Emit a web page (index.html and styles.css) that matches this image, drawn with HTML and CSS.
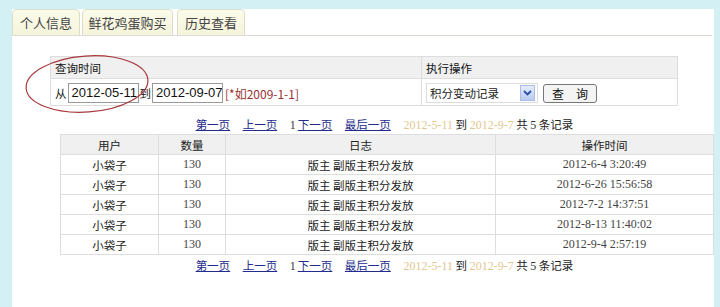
FILE: index.html
```html
<!DOCTYPE html>
<html lang="zh-CN">
<head>
    <meta charset="UTF-8">
    <title>积分变动记录</title>
    <link rel="stylesheet" href="styles.css">
</head>
<body>
    <div class="frame">
        <div class="tabs">
            <div class="tab tab-info">个人信息</div>
            <div class="tab tab-shop">鲜花鸡蛋购买</div>
            <div class="tab tab-hist">历史查看</div>
        </div>

        <div class="panel">
            <table class="query">
                <tr class="query-head">
                    <td class="col-time">查询时间</td>
                    <td>执行操作</td>
                </tr>
                <tr class="query-body">
                    <td class="col-time">
                        <div class="range">
                            <span>从</span><span class="field">2012-05-11</span><span>到</span><span class="field">2012-09-07</span>
                            <span class="hint">[*如2009-1-1]</span>
                        </div>
                    </td>
                    <td>
                        <div class="action">
                            <div class="select">
                                <span>积分变动记录</span>
                                <span class="arrow">
                                    <svg width="9" height="6" viewBox="0 0 9 6"><path d="M1 1 L4.5 4.5 L8 1" fill="none" stroke="#2c4fa8" stroke-width="1.8"/></svg>
                                </span>
                            </div>
                            <button class="btn">查　询</button>
                        </div>
                    </td>
                </tr>
            </table>

            <div class="pager pager-top">
                <a href="#">第一页</a>
                <a href="#">上一页</a>
                <span class="num">1</span><a href="#" class="tight">下一页</a>
                <a href="#">最后一页</a>
                <span class="date">2012-5-11</span> 到 <span class="date">2012-9-7</span> 共 <span class="num">5</span> 条记录
            </div>

            <table class="log">
                <tr>
                    <th class="c-user">用户</th>
                    <th class="c-qty">数量</th>
                    <th class="c-note">日志</th>
                    <th class="c-time">操作时间</th>
                </tr>
                <tr><td>小袋子</td><td class="serif">130</td><td>版主 副版主积分发放</td><td class="serif">2012-6-4 3:20:49</td></tr>
                <tr><td>小袋子</td><td class="serif">130</td><td>版主 副版主积分发放</td><td class="serif">2012-6-26 15:56:58</td></tr>
                <tr><td>小袋子</td><td class="serif">130</td><td>版主 副版主积分发放</td><td class="serif">2012-7-2 14:37:51</td></tr>
                <tr><td>小袋子</td><td class="serif">130</td><td>版主 副版主积分发放</td><td class="serif">2012-8-13 11:40:02</td></tr>
                <tr><td>小袋子</td><td class="serif">130</td><td>版主 副版主积分发放</td><td class="serif">2012-9-4 2:57:19</td></tr>
            </table>

            <div class="pager">
                <a href="#">第一页</a>
                <a href="#">上一页</a>
                <span class="num">1</span><a href="#" class="tight">下一页</a>
                <a href="#">最后一页</a>
                <span class="date">2012-5-11</span> 到 <span class="date">2012-9-7</span> 共 <span class="num">5</span> 条记录
            </div>
        </div>
    </div>

    <!-- hand-drawn circle around the date field -->
    <svg class="mark" width="720" height="307" viewBox="0 0 720 307">
        <ellipse cx="87" cy="84" rx="61" ry="28" transform="rotate(-4 87 84)" fill="none" stroke="#a8383c" stroke-width="1.2"/>
    </svg>
</body>
</html>
```

FILE: styles.css
```css
body {
    margin: 0;
    background: #d3f0f4;
    font-family: "Noto Sans CJK SC", sans-serif;
    font-size: 11.5px;
    color: #222;
    height: 307px;
    overflow: hidden;
    position: relative;
}

.frame {
    margin: 9px 0 0 12px;
    width: 702px;
    height: 298px;
    background: #fff;
}

.tabs {
    display: flex;
    height: 26px;
    align-items: flex-end;
}

.tab {
    height: 26px;
    line-height: 25px;
    font-size: 13px;
    color: #444;
    text-align: center;
    background: linear-gradient(#fbfbea, #f5f5dc);
    border: 1px solid #dcdcc8;
    border-bottom: none;
    border-radius: 5px 5px 0 0;
    box-sizing: border-box;
}

.tab-info { width: 68px; }
.tab-shop { width: 91px; margin-left: 2px; }
.tab-hist { width: 68px; margin-left: 4px; }

.panel {
    border-top: 1px solid #dcdcd4;
    width: 700px;
    padding-top: 20px;
}

.query {
    margin-left: 38px;
    width: 628px;
    border-collapse: collapse;
    border: 1px solid #ddd;
}

.query td {
    padding: 0 0 0 4px;
    border: 1px solid #ddd;
    box-sizing: border-box;
}

.query .col-time {
    width: 371px;
}

.query-head td {
    height: 22px;
    background: #f0f0f0;
    color: #111;
}

.query-body td {
    height: 27px;
    padding-top: 2px;
}

.range {
    display: flex;
    align-items: center;
    white-space: nowrap;
}

.field {
    display: inline-block;
    width: 66px;
    height: 18px;
    line-height: 18px;
    padding-left: 3px;
    border: 1px solid #999;
    font-family: "Liberation Sans", sans-serif;
    font-size: 13px;
    color: #111;
    margin: 0 1px;
    overflow: hidden;
}

.hint {
    color: #993333;
    font-size: 12px;
    margin-left: 1px;
}

.action {
    display: flex;
    align-items: center;
}

.select {
    width: 112px;
    height: 20px;
    box-sizing: border-box;
    border: 1px solid #ddd;
    display: flex;
    align-items: center;
    justify-content: space-between;
    padding-left: 3px;
    color: #222;
}

.arrow {
    width: 15px;
    height: 16px;
    margin-right: 2px;
    background: linear-gradient(#e6eefc, #b9cbf2);
    border: 1px solid #a9bde8;
    box-sizing: border-box;
    display: flex;
    align-items: center;
    justify-content: center;
}

.btn {
    margin-left: 5px;
    width: 54px;
    height: 19px;
    padding: 0;
    font-family: "Noto Sans CJK SC", sans-serif;
    font-size: 12px;
    line-height: 15px;
    color: #111;
    background: #f4f4f4;
    border: 1px solid #777;
    border-radius: 3px;
}

.pager {
    margin-left: 48px;
    width: 649px;
    height: 20px;
    line-height: 20px;
    text-align: center;
    color: #222;
}

.pager-top {
    margin-top: 8px;
}

.pager a {
    color: #232b8c;
    text-decoration: underline;
    margin-right: 10px;
}

.pager a.tight {
    margin-left: 2px;
}

.pager .num {
    font-family: "Liberation Serif", serif;
    font-size: 12px;
    color: #333;
}

.pager .date {
    font-family: "Liberation Serif", serif;
    font-size: 12px;
    color: #e3c78f;
}

.log {
    margin-left: 48px;
    width: 649px;
    border-collapse: collapse;
    table-layout: fixed;
}

.log th,
.log td {
    border: 1px solid #dedede;
    height: 19px;
    padding: 0;
    text-align: center;
    font-weight: normal;
    color: #222;
}

.log th {
    background: #f0f0f0;
}

.c-user { width: 97px; }
.c-qty { width: 66px; }
.c-note { width: 269px; }
.c-time { width: 217px; }

.log td.serif {
    font-family: "Liberation Serif", serif;
    font-size: 12px;
    color: #444;
}

.mark {
    position: absolute;
    left: 0;
    top: 0;
    pointer-events: none;
}
```
